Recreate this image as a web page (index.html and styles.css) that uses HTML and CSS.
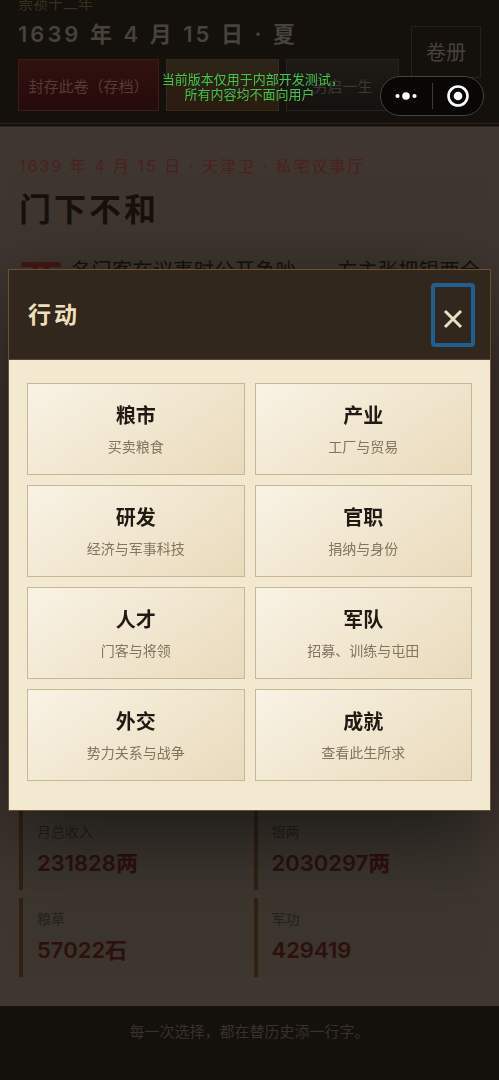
FILE: index.html
```html
<!DOCTYPE html>
<html lang="zh-CN">
<head>
<meta charset="utf-8">
<meta name="viewport" content="width=device-width, initial-scale=1">
<title>行动</title>
<link rel="stylesheet" href="styles.css">
</head>
<body>
<div class="page">
  <header class="topbar">
    <div class="topbar-info">
      <p class="era">崇祯十二年</p>
      <p class="date">1639 年 4 月 15 日 · 夏</p>
      <div class="topbar-actions">
        <button class="btn btn-save" type="button">封存此卷（存档）</button>
        <button class="btn btn-load" type="button" aria-label="读档"></button>
        <button class="btn btn-new" type="button">另启一生</button>
      </div>
    </div>
    <button class="btn-volume" type="button">卷册</button>
  </header>
  <main class="story">
    <p class="scene">1639 年 4 月 15 日 · 天津卫 · 私宅议事厅</p>
    <h1 class="title">门下不和</h1>
    <p class="prose"><span class="dropcap">两</span><span class="prose-line">名门客在议事时公开争吵，一方主张把银两全</span></p>
    <dl class="stats">
      <div class="stat"><dt>月总收入</dt><dd>231828两</dd></div>
      <div class="stat"><dt>银两</dt><dd>2030297两</dd></div>
      <div class="stat"><dt>粮草</dt><dd>57022石</dd></div>
      <div class="stat"><dt>军功</dt><dd>429419</dd></div>
    </dl>
  </main>
  <footer class="footer">每一次选择，都在替历史添一行字。</footer>
</div>

<div class="overlay">
  <section class="dialog" role="dialog" aria-modal="true" aria-labelledby="dialog-title">
    <header class="dialog-head">
      <h2 class="dialog-title" id="dialog-title">行动</h2>
      <button class="close" type="button" aria-label="关闭">
        <svg width="20" height="20" viewBox="0 0 20 20" aria-hidden="true"><path d="M2 2 18 18M18 2 2 18" fill="none" stroke="currentColor" stroke-width="3"/></svg>
      </button>
    </header>
    <div class="actions">
      <button class="action" type="button"><strong>粮市</strong><span>买卖粮食</span></button>
      <button class="action" type="button"><strong>产业</strong><span>工厂与贸易</span></button>
      <button class="action" type="button"><strong>研发</strong><span>经济与军事科技</span></button>
      <button class="action" type="button"><strong>官职</strong><span>捐纳与身份</span></button>
      <button class="action" type="button"><strong>人才</strong><span>门客与将领</span></button>
      <button class="action" type="button"><strong>军队</strong><span>招募、训练与屯田</span></button>
      <button class="action" type="button"><strong>外交</strong><span>势力关系与战争</span></button>
      <button class="action" type="button"><strong>成就</strong><span>查看此生所求</span></button>
    </div>
  </section>
</div>

<p class="notice">当前版本仅用于内部开发测试，<br>所有内容均不面向用户</p>

<div class="capsule">
  <button class="capsule-btn" type="button" aria-label="更多">
    <svg width="24" height="24" viewBox="0 0 24 24" aria-hidden="true"><g fill="#fff"><circle cx="3.5" cy="12" r="2.1"/><circle cx="12" cy="12" r="3.8"/><circle cx="20.5" cy="12" r="2.1"/></g></svg>
  </button>
  <span class="capsule-divider"></span>
  <button class="capsule-btn" type="button" aria-label="退出">
    <svg width="24" height="24" viewBox="0 0 24 24" aria-hidden="true"><circle cx="12" cy="12" r="9.5" fill="none" stroke="#fff" stroke-width="2.6"/><circle cx="12" cy="12" r="4.3" fill="#fff"/></svg>
  </button>
</div>
</body>
</html>
```
FILE: styles.css
```css
* { box-sizing: border-box; }

body, p, h1, h2, dl, dd { margin: 0; }

body {
  font-family: Inter, "Noto Sans CJK SC", sans-serif;
  background: #14100b;
}

button { font: inherit; margin: 0; padding: 0; }

.page {
  display: flex;
  flex-direction: column;
  height: 100vh;
  overflow: hidden;
}

.topbar {
  display: flex;
  align-items: center;
  gap: 12px;
  margin-top: -24px;
  padding: 16px 18px 12px;
  background: #14100b;
  border-bottom: 4px double #2d2318;
}

.topbar-info { flex: 1; }

.era {
  color: #39301f;
  font-size: 15px;
  line-height: 24px;
}

.date {
  color: #46423c;
  font-size: 22px;
  font-weight: 600;
  line-height: 36px;
  letter-spacing: 3px;
}

.topbar-actions {
  display: flex;
  gap: 7px;
  margin-top: 7px;
}

.btn {
  flex: 1 1 114px;
  height: 52px;
  border: 1px solid #35291c;
  font-size: 15px;
  color: #3c3731;
  white-space: nowrap;
}

.btn-save { flex-basis: 142px; background: linear-gradient(#301210, #250b0a); border-color: #3d1b18; color: #5c3a33; }
.btn-load { background: linear-gradient(#2c2418, #2a1b0e); }
.btn-new { background: linear-gradient(#1e1b17, #14110e); border-color: #26231f; }

.btn-volume {
  width: 70px;
  height: 52px;
  border: 1px solid #25211c;
  background: transparent;
  color: #47423c;
  font-size: 20px;
}

.story {
  flex: 1;
  display: flex;
  flex-direction: column;
  padding: 26px 19px 29px;
  background: #3f3630;
}

.scene {
  color: #4a2020;
  font-size: 16px;
  line-height: 26px;
  letter-spacing: 2px;
}

.title {
  margin-top: 6px;
  color: #16110b;
  font-size: 32px;
  font-weight: 700;
  line-height: 50px;
  letter-spacing: 3px;
}

.prose {
  display: flex;
  align-items: flex-start;
  gap: 8px;
  margin-top: 16px;
  color: #16110b;
  font-size: 20px;
  line-height: 40px;
}

.dropcap {
  color: #451815;
  font-size: 44px;
  font-weight: 700;
  line-height: 60px;
}

.prose-line {
  flex: 1;
  text-align-last: justify;
  white-space: nowrap;
}

.stats {
  display: grid;
  grid-template-columns: 1fr 1fr;
  gap: 8px;
  margin-top: auto;
}

.stat {
  padding: 7px 14px 10px;
  border-left: 4px solid #2f2213;
  background: #3c362f;
}

.stat dt {
  color: #26211b;
  font-size: 14px;
  line-height: 28px;
}

.stat dd {
  color: #2e100e;
  font-size: 22px;
  font-weight: 600;
  line-height: 34px;
}

.footer {
  padding: 14px 18px 36px;
  background: #14100b;
  color: #37322c;
  font-size: 15px;
  line-height: 24px;
  text-align: center;
}

.overlay {
  position: fixed;
  inset: 0;
  display: flex;
  align-items: center;
  justify-content: center;
  padding: 8px;
}

.dialog {
  width: 100%;
  border: 1px solid #70502f;
  background: #f3e8d0;
  box-shadow: 0 24px 80px rgba(0, 0, 0, 0.55);
}

.dialog-head {
  display: flex;
  align-items: center;
  justify-content: space-between;
  padding: 13px 15px 12px 19px;
  background: #31271c;
  border-bottom: 1px solid #5d452c;
}

.dialog-title {
  color: #f0dfbd;
  font-size: 23px;
  font-weight: 700;
  line-height: 36px;
  letter-spacing: 3px;
}

.close {
  display: grid;
  place-items: center;
  width: 44px;
  height: 64px;
  padding-top: 7px;
  border: 4px solid #205f94;
  border-radius: 4px;
  background: transparent;
  color: #ecdfc3;
}

.actions {
  display: grid;
  grid-template-columns: 1fr 1fr;
  gap: 10px;
  padding: 23px 18px 29px;
}

.action {
  display: flex;
  flex-direction: column;
  align-items: center;
  justify-content: center;
  padding: 15px 8px 13px;
  border: 1px solid #c5b798;
  background: linear-gradient(145deg, #f9f3e5, #e9dabb);
}

.action strong {
  color: #211a14;
  font-size: 20px;
  line-height: 34px;
}

.action span {
  color: #82745f;
  font-size: 14px;
  line-height: 28px;
}

.notice {
  position: fixed;
  top: 72px;
  left: 0;
  right: 0;
  color: #45c44c;
  font-size: 13px;
  font-feature-settings: "halt";
  line-height: 15px;
  text-align: center;
}

.capsule {
  position: fixed;
  top: 76px;
  right: 15px;
  display: flex;
  align-items: center;
  width: 104px;
  padding: 6px 0;
  border: 1px solid #45423e;
  border-radius: 20px;
  background: #080705;
}

.capsule-btn {
  flex: 1;
  display: grid;
  place-items: center;
  border: 0;
  background: transparent;
}

.capsule-divider {
  width: 1px;
  height: 26px;
  background: #3e3b37;
}
```
